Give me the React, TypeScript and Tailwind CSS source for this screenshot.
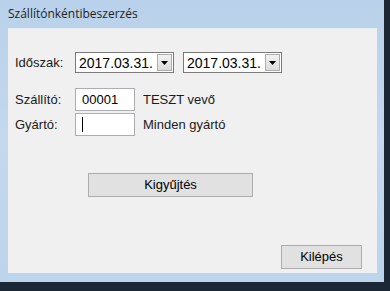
const DateBox = ({ value }: { value: string }) => (
  <div className="flex h-[21px] w-[99px] items-center justify-between border border-[#7a7a7a] bg-white pl-[3px] pr-[1px]">
    <span className="text-[14px] leading-none text-black">{value}</span>
    <div className="flex h-[17px] w-[15px] items-center justify-center border border-[#adadad] bg-gradient-to-b from-[#f2f2f2] to-[#dcdcdc]">
      <svg width="7" height="4" viewBox="0 0 7 4">
        <path d="M0 0h7L3.5 4z" fill="#000" />
      </svg>
    </div>
  </div>
);

const Field = ({
  label,
  value,
  note,
  caret,
}: {
  label: string;
  value: string;
  note: string;
  caret?: boolean;
}) => (
  <div className="flex items-center">
    <span className="w-[60px] text-[13px] text-[#1a1a1a]">{label}</span>
    <div className="flex h-[23px] w-[60px] items-center border border-[#abadb3] bg-white px-[6px] text-[13px] text-black">
      {caret ? <span className="h-[15px] w-px bg-black" /> : value}
    </div>
    <span className="ml-[8px] text-[13px] text-[#1a1a1a]">{note}</span>
  </div>
);

const App = () => {
  return (
    <div
      className="h-[291px] w-[390px] overflow-hidden bg-[#1b2734]"
      style={{ fontFamily: '"Liberation Sans", Arial, sans-serif' }}
    >
      <div className="flex h-[282px] w-[384px] flex-col bg-gradient-to-b from-[#b9d1ea] via-[#c4d8ee] to-[#bcd4ec]">
        <div className="flex h-[28px] items-center pl-[8px]">
          <span
            className="text-[12px] text-[#1e1e1e]"
            style={{ fontFamily: '"Open Sans", "Noto Sans", sans-serif' }}
          >
            Szállítónkéntibeszerzés
          </span>
        </div>
        <div className="mx-[8px] mb-[9px] mr-[7px] flex flex-1 flex-col border-t border-[#e8eef6] bg-[#f0f0f0] pl-[7px] pr-[15px]">
          <div className="mt-[23px] flex items-center">
            <span className="w-[60px] text-[13px] text-[#1a1a1a]">Időszak:</span>
            <DateBox value="2017.03.31." />
            <div className="ml-[9px]">
              <DateBox value="2017.03.31." />
            </div>
          </div>
          <div className="mt-[15px] flex flex-col gap-[2px]">
            <Field label="Szállító:" value="00001" note="TESZT vevő" />
            <Field label="Gyártó:" value="" note="Minden gyártó" caret />
          </div>
          <div className="mt-[36px] pl-[73px]">
            <button className="h-[24px] w-[165px] border border-[#acacac] bg-[#e1e1e1] text-[13px] text-black">
              Kigyűjtés
            </button>
          </div>
          <div className="mt-auto mb-[4px] flex justify-end">
            <button className="h-[24px] w-[81px] border border-[#acacac] bg-[#e1e1e1] text-[13px] text-black">
              Kilépés
            </button>
          </div>
        </div>
      </div>
    </div>
  );
};

export default App;
